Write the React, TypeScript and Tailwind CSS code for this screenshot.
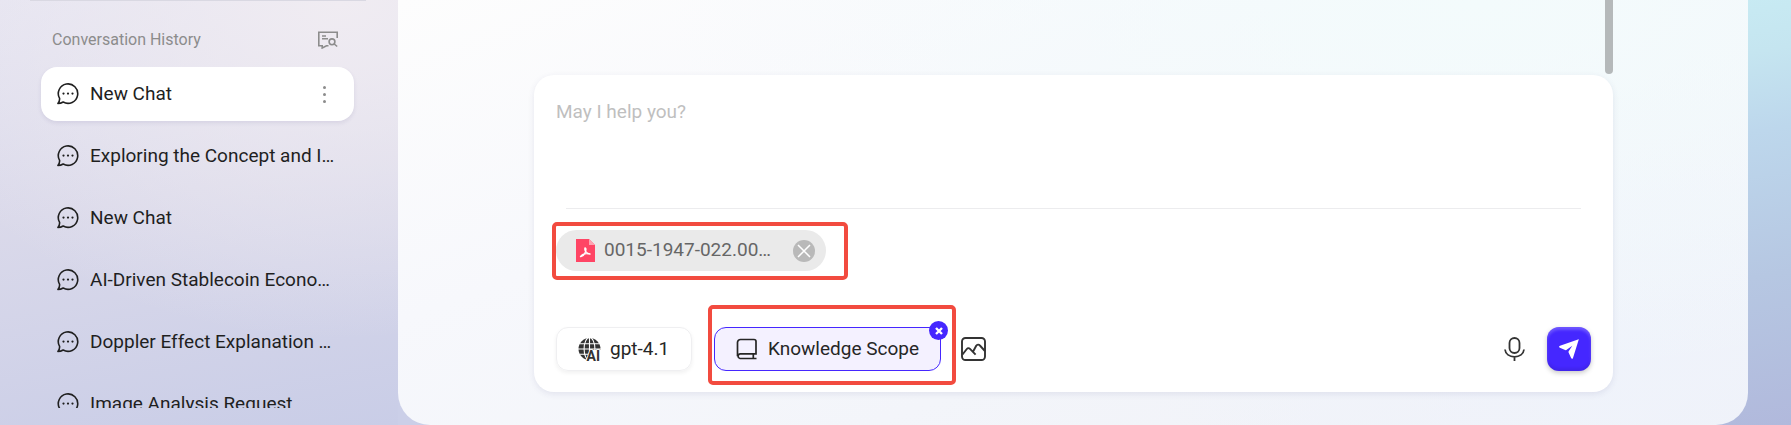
import React, { useState } from "react";

const conversations = [
  { id: 1, title: "New Chat" },
  { id: 2, title: "Exploring the Concept and I…" },
  { id: 3, title: "New Chat" },
  { id: 4, title: "AI-Driven Stablecoin Econo…" },
  { id: 5, title: "Doppler Effect Explanation …" },
  { id: 6, title: "Image Analysis Request" },
];

const ChatIcon: React.FC = () => (
  <svg viewBox="0 0 22 22" className="size-[22px] shrink-0" fill="none" aria-hidden="true">
    <path
      d="M.9 20.500C2 19.200 2.800 17.600 2.600 15.450A9.700 9.700 0 1 1 6.200 19.050C4.800 19.900 3 20.500.9 20.500Z"
      stroke="#1f1f1f"
      strokeWidth="1.6"
      strokeLinejoin="round"
    />
    <circle cx="6.500" cy="10.600" r="1.100" fill="#1f1f1f" />
    <circle cx="11" cy="10.600" r="1.100" fill="#1f1f1f" />
    <circle cx="15.500" cy="10.600" r="1.100" fill="#1f1f1f" />
  </svg>
);

const HistorySearchIcon: React.FC = () => (
  <svg viewBox="0 0 20 18" className="h-[18px] w-5" fill="none" stroke="#8c8c8c" strokeWidth="1.6" aria-hidden="true">
    <path d="M19.200 7V1.200H.800v13.600h3.400v2.200l4.300-2.200h2" />
    <path d="M4 5h4M4 7.700h6" />
    <circle cx="14" cy="10.800" r="2.900" />
    <path d="m16.200 13 3 2.500" />
  </svg>
);

const PdfIcon: React.FC = () => (
  <svg viewBox="0 0 19 23" className="h-[23px] w-[19px] shrink-0" aria-hidden="true">
    <path d="M0 0h13l6 6v17H0Z" fill="#ff4565" />
    <path d="M13 0v6h6Z" fill="#ffa3b2" />
    <path
      d="M9 9c1.600 0 1 3-.2 5.400M4.500 17.600c1.500-2.400 5-3.600 9.500-2.600M9 9c-1 2 1.500 5.500 5 6M4.500 17.600c1.800.3 3.500-1.600 4.300-3.200"
      fill="none"
      stroke="#fff"
      strokeWidth="1.300"
      strokeLinecap="round"
    />
  </svg>
);

const GlobeAiIcon: React.FC = () => (
  <svg viewBox="0 0 23 23" className="size-[23px] shrink-0" aria-hidden="true">
    <circle cx="11.500" cy="11" r="11" fill="#333" />
    <g fill="none" stroke="#fff" strokeWidth="1.100">
      <path d="M11.500 0v22M0 11h23M1.500 5.800h20M1.500 16.200h20" />
      <ellipse cx="11.500" cy="11" rx="5.400" ry="11.500" />
    </g>
    <path d="M8.500 23 11.500 12H23v11Z" fill="#fff" />
    <text
      x="8.500"
      y="22.500"
      fontFamily="Roboto, sans-serif"
      fontSize="14"
      fontWeight="700"
      fill="#333"
      stroke="#fff"
      strokeWidth="1.600"
      paintOrder="stroke"
    >
      AI
    </text>
  </svg>
);

const BookIcon: React.FC = () => (
  <svg viewBox="0 0 22 22" className="size-[22px] shrink-0" fill="none" stroke="#262626" strokeWidth="1.700" aria-hidden="true">
    <path d="M1.500 18.300V4.500A3 3 0 0 1 4.500 1.500h13.500a2 2 0 0 1 2 2v12.300H4a2.400 2.400 0 0 0 0 4.700h16.500" />
    <path d="M17.300 15.800v4.700" />
  </svg>
);

const ImageIcon: React.FC = () => (
  <svg viewBox="0 0 25 24" className="h-6 w-[25px]" fill="none" stroke="#333" strokeWidth="1.900" strokeLinejoin="round" aria-hidden="true">
    <rect x="1" y="1" width="23" height="22" rx="3.500" />
    <path d="M1.500 17.500 5.800 12c.9-1.100 2.200-1.100 3.200-.1l5.600 5.800M12 14.800l3.200-6c.9-1.500 2.700-1.600 3.700-.3l5 5.500" />
  </svg>
);

const MicIcon: React.FC = () => (
  <svg viewBox="0 0 21 24" className="h-6 w-[21px]" fill="none" stroke="#333" strokeWidth="1.800" aria-hidden="true">
    <rect x="5.500" y="1" width="10" height="15" rx="5" />
    <path d="M1 12.500c.5 4.500 4.500 7.300 9.500 7.300s9-2.800 9.500-7.300M10.500 19.800V24" />
  </svg>
);

const SendIcon: React.FC = () => (
  <svg viewBox="0 0 20 20" className="size-5" fill="#fff" aria-hidden="true">
    <path d="M19 .4c.6-.2.8.1.6.7l-5.600 17.800c-.4 1.200-1.400 1.200-1.900.1L9.600 13.500c-.2-.4-.1-.8.100-1.200l3.600-5.500-6 4.100c-.4.300-.8.300-1.200.1L.9 8.700c-1.200-.5-1.100-1.500.1-1.900Z" />
  </svg>
);

const Sidebar: React.FC = () => {
  const [activeId, setActiveId] = useState(1);

  return (
    <aside className="flex w-[398px] shrink-0 flex-col bg-[radial-gradient(460px_340px_at_340px_0px,#f0ecf2_0%,rgba(240,236,242,0.5)_50%,transparent_100%),linear-gradient(170deg,#e5e4f1_0%,#dad9ea_45%,#c9cde7_100%)] pb-[17px]">
      <div className="mr-8 ml-[30px] border-t border-[#d9d8e2] pt-px" />
      <div className="flex h-[65px] shrink-0 items-center justify-between pt-[10px] pr-[60px] pl-[52px]">
        <h2 className="text-base text-[#8c8c8c]">Conversation History</h2>
        <button aria-label="Search history">
          <HistorySearchIcon />
        </button>
      </div>

      {/* Conversation list */}
      <ul className="flex min-h-0 flex-1 flex-col gap-2 overflow-hidden pr-11 pl-[41px]">
        {conversations.map((item) => (
          <li
            key={item.id}
            className={
              item.id === activeId
                ? "flex h-[54px] shrink-0 items-center rounded-2xl bg-white pr-5 pl-4 shadow-[0_2px_4px_rgba(60,50,120,0.1)]"
                : "flex h-[54px] shrink-0 items-center rounded-2xl pr-3 pl-4"
            }
          >
            <button
              className="flex min-w-0 flex-1 items-center gap-[11px] text-left"
              onClick={() => setActiveId(item.id)}
            >
              <ChatIcon />
              <span className="truncate text-[19px] text-[#1f1f1f]">{item.title}</span>
            </button>
            {item.id === activeId && (
              <button className="flex w-5 flex-col items-center gap-1" aria-label="More options">
                <span className="size-[3px] rounded-full bg-[#8c8c8c]" />
                <span className="size-[3px] rounded-full bg-[#8c8c8c]" />
                <span className="size-[3px] rounded-full bg-[#8c8c8c]" />
              </button>
            )}
          </li>
        ))}
      </ul>
    </aside>
  );
};

const Composer: React.FC = () => {
  const [message, setMessage] = useState("");

  return (
    <form
      className="flex flex-col rounded-[20px] bg-white px-[22px] pt-6 pb-[21px] shadow-[0_2px_6px_rgba(60,60,120,0.1)]"
      onSubmit={(e) => e.preventDefault()}
    >
      <textarea
        aria-label="Message"
        className="h-[109px] resize-none text-[19px] leading-[26px] outline-none placeholder:text-[#bfbfbf]"
        placeholder="May I help you?"
        value={message}
        onChange={(e) => setMessage(e.target.value)}
      />
      <div className="mr-[10px] ml-[10px] border-t border-[#ececee]" />

      {/* Attached file */}
      <div className="relative mt-[21px] flex h-[41px] w-[270px] items-center rounded-full bg-[#eaeaea] pr-[11px] pl-5">
        <PdfIcon />
        <span className="ml-[9px] text-[19px] text-[#666]">0015-1947-022.00…</span>
        <button className="ml-auto" aria-label="Remove file">
          <svg viewBox="0 0 22 22" className="size-[22px]" aria-hidden="true">
            <circle cx="11" cy="11" r="11" fill="#b9b9b9" />
            <path d="m5 5 12 12m0-12-12 12" stroke="#fff" strokeWidth="1.500" />
          </svg>
        </button>
        <span className="pointer-events-none absolute -top-2 -right-[22px] -bottom-[9px] -left-1 rounded-[5px] border-4 border-[#f24b3f]" />
      </div>

      {/* Toolbar */}
      <div className="mt-14 flex h-11 items-center">
        <button className="flex h-11 w-[136px] items-center gap-[9px] rounded-xl border border-[#efeff1] pl-[21px] text-[19px] text-[#262626] shadow-[0_2px_4px_rgba(0,0,0,0.06)]">
          <GlobeAiIcon />
          gpt-4.1
        </button>

        <div className="relative ml-[22px]">
          <button className="flex h-11 w-[227px] items-center gap-[10px] rounded-xl border border-[#4527ff] bg-[#f4f1ff] pl-[21px] text-[19px] whitespace-nowrap text-[#262626]">
            <BookIcon />
            Knowledge Scope
          </button>
          <button
            className="absolute -top-[6px] -right-[7px] flex size-[19px] items-center justify-center rounded-full bg-[#4527ff]"
            aria-label="Remove knowledge scope"
          >
            <svg viewBox="0 0 8 8" className="size-2" aria-hidden="true">
              <path d="m1 1 6 6m0-6L1 7" stroke="#fff" strokeWidth="2.400" />
            </svg>
          </button>
          <span className="pointer-events-none absolute -top-[22px] -right-[15px] -bottom-[14px] -left-[6px] rounded-[5px] border-4 border-[#f24b3f]" />
        </div>

        <button className="ml-5" aria-label="Add image">
          <ImageIcon />
        </button>

        <div className="ml-auto flex items-center gap-[22px]">
          <button aria-label="Voice input">
            <MicIcon />
          </button>
          <button
            className="flex size-11 items-center justify-center rounded-xl bg-[#4527ff] shadow-[0_2px_5px_rgba(0,0,0,0.22),inset_0_3px_3px_rgba(255,255,255,0.22),inset_0_-3px_3px_rgba(0,0,0,0.08)]"
            aria-label="Send"
          >
            <SendIcon />
          </button>
        </div>
      </div>
    </form>
  );
};

const App: React.FC = () => (
  <div className="flex h-screen overflow-hidden bg-[linear-gradient(170deg,#c8ebf3_0%,#c5e5f0_14%,#bdd7ec_32%,#b6c7e2_65%,#b1b9dc_100%)] bg-[length:90px_100%] bg-right bg-no-repeat pr-[43px] font-[Roboto,sans-serif]">
    <Sidebar />
    <div className="flex min-w-0 flex-1 bg-[linear-gradient(#cbcfe8,#cbcfe8)] bg-[length:40px_100%] bg-no-repeat">
      <main className="flex min-w-0 flex-1 flex-col rounded-b-[32px] bg-[radial-gradient(60%_90%_at_80%_0%,#f3fbfc_0%,transparent_100%),radial-gradient(35%_70%_at_90%_80%,#eff3fb_0%,transparent_100%),linear-gradient(160deg,#fdfdfd_0%,#f7f8fc_35%,#f3f5fa_65%,#f0f1f7_100%)] pr-[135px] pb-[33px] pl-[136px]">
        {/* Message area, scrolled to the end */}
        <div className="flex min-h-0 flex-1 justify-end pb-px">
          <div className="w-2 rounded-b-full bg-[#b5b9ba]" />
        </div>
        <Composer />
      </main>
    </div>
  </div>
);

export default App;
